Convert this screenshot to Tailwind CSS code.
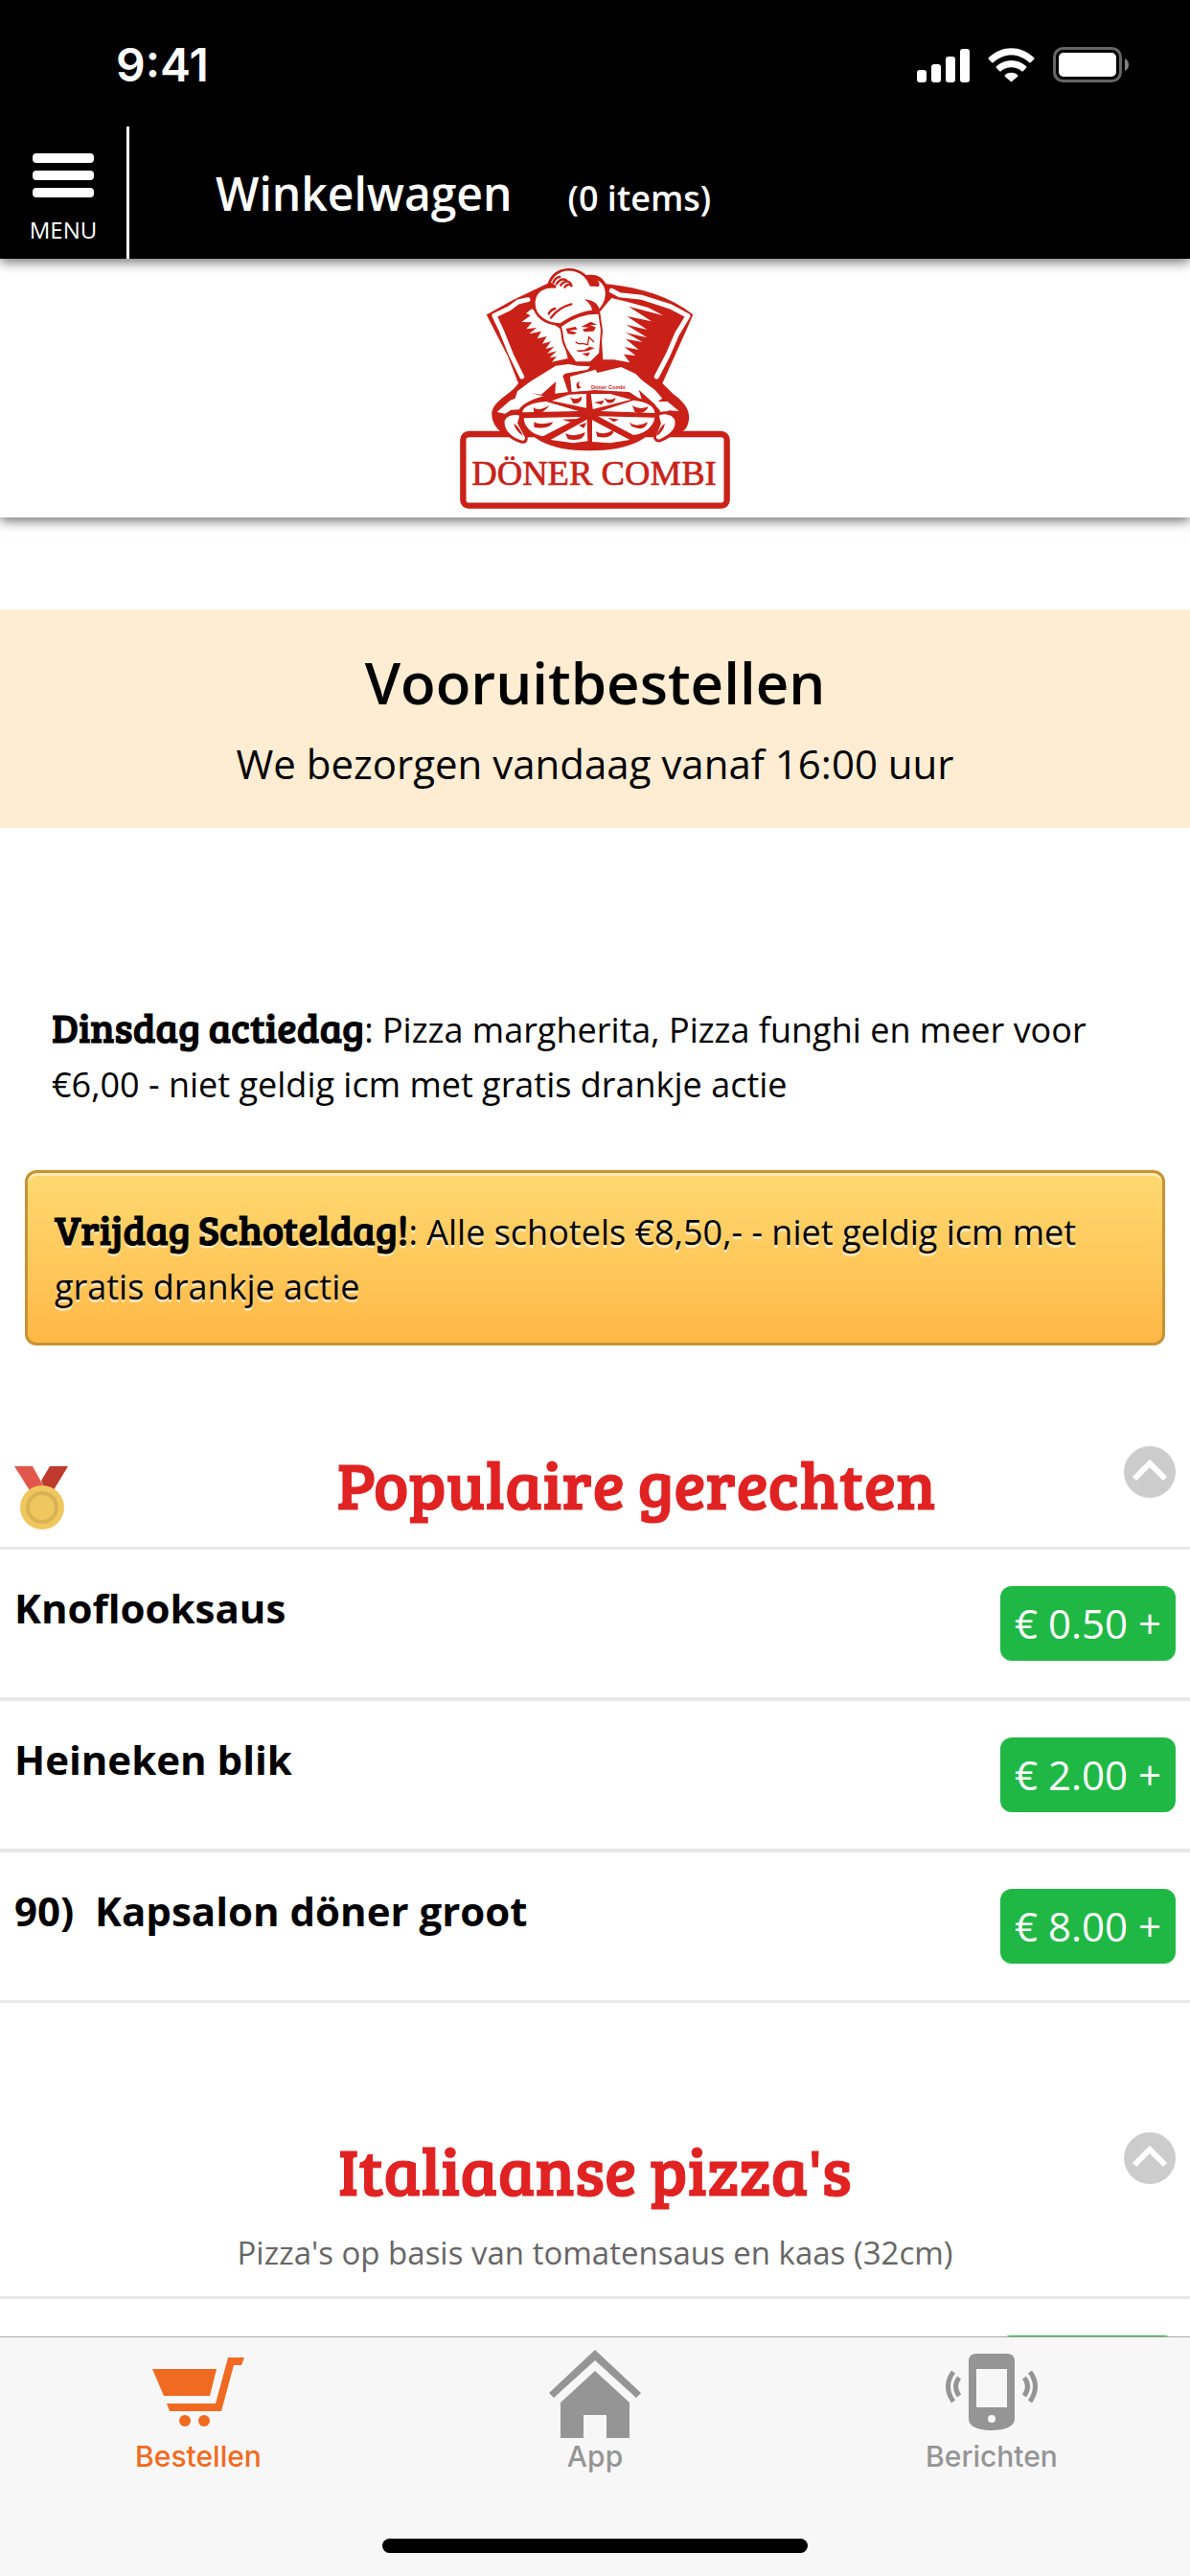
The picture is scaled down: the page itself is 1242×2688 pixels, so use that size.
<!DOCTYPE html>
<html lang="nl">
  <head>
    <meta charset="utf-8" />
    <title>Döner Combi</title>
    <meta name="viewport" content="width=device-width, initial-scale=1" />
    <script src="https://cdn.jsdelivr.net/npm/@tailwindcss/browser@4"></script>
  </head>
  <body class="bg-white">
    <div class="flex flex-col w-full h-screen overflow-hidden font-['Open_Sans',sans-serif] text-black">
      <header class="relative z-20 text-white bg-black shadow-[0_3px_12px_rgba(0,0,0,0.6)]">
        <!-- status bar -->
        <div class="flex items-center justify-between h-[132px] pt-1 pl-[121px] pr-16">
          <div class="text-[48px] leading-[60px] font-semibold font-['Inter',sans-serif]">9:41</div>
          <div class="flex items-center gap-[19px]">
            <svg class="w-[55px] h-[36px]" viewBox="0 0 55 36" fill="#fff">
              <rect x="0" y="23" width="10" height="13" rx="3" />
              <rect x="15" y="17" width="10" height="19" rx="3" />
              <rect x="30" y="9" width="10" height="27" rx="3" />
              <rect x="45" y="1" width="10" height="35" rx="3" />
            </svg>
            <svg class="w-[49px] h-[36px]" viewBox="0 0 49 36" fill="#fff">
              <path d="M1 10 Q0 11 1 12 L4 15 Q5 16 6 15 C17 5 32 5 43 15 Q44 16 45 15 L48 12 Q49 11 48 10 C34 -3 15 -3 1 10Z" />
              <path d="M9 19 Q8 20 9 21 L12 24 Q13 25 14 24 C20 19 29 19 35 24 Q36 25 37 24 L40 21 Q41 20 40 19 C31 11 18 11 9 19Z" />
              <path d="M18 28 Q17 29 18 30 L24 35 Q24.500 36 25 35 L31 30 Q32 29 31 28 C27 25 22 25 18 28Z" />
            </svg>
            <svg class="w-[79px] h-[38px]" viewBox="0 0 79 38">
              <rect x="1.500" y="1.500" width="69" height="34" rx="9" fill="none" stroke="#666" stroke-width="3" />
              <rect x="6" y="6" width="60" height="25" rx="5" fill="#fff" />
              <path d="M75 12 Q79 14 79 18.500 Q79 23 75 25Z" fill="#808080" />
            </svg>
          </div>
        </div>
        <div class="flex items-stretch h-[138px]">
          <button type="button" class="flex flex-col items-center w-[135px] pt-7 border-r-3 border-white">
            <svg class="w-16 h-[46px]" viewBox="0 0 64 46" fill="#fff">
              <rect width="64" height="10" rx="4" />
              <rect y="18" width="64" height="10" rx="4" />
              <rect y="36" width="64" height="10" rx="4" />
            </svg>
            <span class="mt-[18px] text-[24px] leading-8">MENU</span>
          </button>
          <a href="#cart" class="flex items-baseline gap-[58px] pl-[90px] pt-[38px] font-semibold">
            <span class="text-[48px] leading-[64px]">Winkelwagen</span>
            <span class="text-[36px] leading-[48px]">(0 items)</span>
          </a>
        </div>
      </header>

      <main class="flex-1 min-h-0 overflow-y-auto [scrollbar-width:none]">
        <div class="flex justify-center pt-[9px] pb-[9px] bg-white shadow-[0_3px_12px_rgba(0,0,0,0.6)]">
          <a href="#home" aria-label="Döner Combi">
            <svg class="w-[282px] h-[252px]" viewBox="30 42 846 756" fill="#c92118">
              <!-- box lid and shoulders -->
              <path d="M113 190 L195 145 L305 92 C322 48 375 30 425 66 C460 62 475 72 488 94 C600 105 690 135 760 190 L745 225 L664 405 L700 440 C735 465 750 490 747 518 C743 545 735 552 715 562 H165 C140 545 128 520 130 495 C140 455 190 440 213 405 L180 320Z" />
              <g fill="none" stroke="#fff" stroke-width="15" stroke-linecap="round" stroke-linejoin="round">
                <path d="M243 143 L212 150 L185 170 L138 193 L160 240 L190 315 L224 384" />
                <path d="M505 115 L530 128 L600 136 L690 165 L744 194 L710 250 L682 315 L646 384" />
              </g>
              <path fill="#fff" d="M255 172 L237 186 L251 193 L223 213 L256 214 L238 235 L270 231 L247 250 L285 242 L272 265 L302 258 L288 281 L315 274 L298 297 L325 290 L303 312 L333 304 L311 325 L333 321 L318 338 L368 327 L345 235Z" />
              <path fill="#fff" d="M468 180 L505 138 L555 150 L620 168 L667 193 L558 164 L630 211 L553 195 L616 237 L550 221 L616 262 L549 246 L602 276 L549 266 L590 300 L545 291 L580 318 L543 314 L562 340 L512 331 L478 331Z" />
              <!-- hat -->
              <path fill="#fff" stroke="#c92118" stroke-width="8" d="M345 221 C300 220 260 195 262 150 C265 110 300 100 330 103 L310 91 C325 50 365 45 390 51 C425 60 435 85 440 97 L462 98 C466 88 450 80 442 80 C470 70 492 100 489 130 C488 150 475 170 463 180 C430 178 385 192 345 221Z" />
              <g fill="none" stroke="#c92118" stroke-width="7" stroke-linecap="round">
                <path d="M322 90 Q330 72 343 72" />
                <path d="M332 94 Q348 72 364 83" />
                <path d="M345 98 Q365 76 378 94" />
                <path d="M358 104 Q368 90 380 100" />
                <path d="M308 187 Q315 174 328 171" />
                <path d="M315 200 Q340 166 379 157" />
              </g>
              <path d="M420 142 Q462 145 468 178 L444 182 Q445 160 420 142Z" />
              <!-- face -->
              <path fill="#fff" stroke="#c92118" stroke-width="6" d="M345 226 C385 195 430 184 466 185 L474 240 L468 312 L440 339 L392 340 C370 310 350 285 350 250Z" />
              <path d="M362 234 L392 228 L398 236 L372 240 L396 246 L388 252 L368 250Z" />
              <path d="M410 228 L440 212 L460 222 L438 222 L456 230 L448 242 L420 244 L414 236 L434 230Z" />
              <path d="M392 302 L420 300 L436 290 L452 295 L430 304 L404 307Z" />
              <path d="M412 312 L438 308 L430 321Z" />
              <path d="M392 275 Q402 284 414 280 L430 284 L434 260 L450 276" fill="none" stroke="#c92118" stroke-width="4" />
              <!-- jacket and arms -->
              <path fill="#fff" d="M330 350 L370 345 L400 350 L438 352 L430 362 L360 374 L352 382 L370 436 L328 438 L330 400 L285 440 L255 436 L310 450 L245 468 L220 487 L190 488 L172 500 L146 495 L188 458 L203 452 L210 430 L250 400Z" />
              <path fill="#fff" d="M375 384 L455 362 L460 372 L535 354 L580 375 L600 395 L640 425 L664 452 L650 462 L680 462 L716 492 L685 490 L660 500 L640 470 L590 425 L600 458 L560 432 L450 426 L380 434Z" />
              <path d="M405 398 Q388 405 398 422 L410 419 Q398 411 405 398Z" />
              <text x="441" y="422" font-size="17" font-weight="bold" font-family="Liberation Sans, sans-serif">Döner Combi</text>
              <!-- name plate -->
              <rect x="40" y="564" width="826" height="224" rx="18" fill="#fff" stroke="#c92118" stroke-width="19" />
              <!-- pizza -->
              <path d="M214 490 C230 455 320 430 430 430 C540 430 630 455 656 490 C650 580 560 616 435 616 C310 616 230 580 214 490Z" />
              <g fill="#fff">
                <path d="M226 496 C225 478 260 464 300 462 L402 492Z" />
                <path d="M318 460 L372 440 L426 438 L426 482Z" />
                <path d="M440 438 L500 438 L566 456 L446 486Z" />
                <path d="M470 492 L574 458 C610 462 640 475 640 498Z" />
                <path d="M230 514 L408 510 L290 571 C255 565 230 540 230 514Z" />
                <path d="M314 582 L428 518 L430 586 L385 592Z" />
                <path d="M444 520 L562 582 L500 592 L444 588Z" />
                <path d="M462 508 L640 512 C635 545 600 566 572 566Z" />
              </g>
              <path d="M260 480 Q275 494 310 474 Q290 504 262 496Z M375 448 Q390 460 412 446 Q412 470 385 468Z M450 465 L482 458 L474 472Z M480 450 Q498 462 518 450 Q514 470 492 466Z M570 474 Q590 490 620 478 Q610 504 578 496Z M262 526 Q280 538 322 526 Q310 552 262 542Z M350 518 L400 516 L380 528Z M360 562 Q390 575 422 558 Q420 588 368 580Z M456 556 Q480 570 512 550 Q510 582 460 572Z M492 512 L528 518 L512 526Z M560 526 Q580 546 618 526 Q610 558 568 540Z M402 536 L426 528 L418 546Z" />
              <!-- hands -->
              <path fill="#fff" stroke="#c92118" stroke-width="9" d="M165 525 C170 500 200 495 222 503 L215 530 L238 572 Q240 592 222 588 C195 580 165 560 165 525Z" />
              <path fill="#fff" stroke="#c92118" stroke-width="9" d="M708 525 C705 498 670 492 648 503 L655 530 L640 570 Q640 588 658 584 C690 570 710 550 708 525Z" />
              <path d="M198 530 Q215 540 228 570 Q205 555 198 530Z M672 530 Q655 542 645 570 Q668 556 672 530Z" />
              <text x="450" y="722" text-anchor="middle" font-size="110" font-family="Liberation Serif, serif" stroke="#c92118" stroke-width="2">DÖNER COMBI</text>
            </svg>
          </a>
        </div>

        <section class="mt-24 px-4 pt-9 pb-[39px] text-center bg-[#ffedd3]">
          <h1 class="text-[60px] leading-[80px] font-semibold">Vooruitbestellen</h1>
          <p class="mt-[17px] text-[42px] leading-[56px]">We bezorgen vandaag vanaf 16:00 uur</p>
        </section>

        <p class="mt-[182px] px-[54px] text-[36px] leading-[57px]">
          <strong class="text-[42px] leading-none font-normal font-['Bree_Serif',serif] [-webkit-text-stroke:1px]">Dinsdag actiedag</strong>: Pizza margherita, Pizza funghi en meer voor €6,00 - niet geldig icm met gratis drankje actie
        </p>
        <p class="mx-[26px] mt-[61px] px-7 pt-[33px] pb-[30px] text-[36px] leading-[57px] rounded-xl border-3 border-[#c99233] bg-linear-to-b from-[#fed970] to-[#ffb846] shadow-[inset_0_3px_0_rgba(255,255,255,0.5)] text-shadow-[0_3px_0_rgba(255,255,255,0.6)]">
          <strong class="text-[42px] leading-none font-normal font-['Bree_Serif',serif] [-webkit-text-stroke:1px]">Vrijdag Schoteldag!</strong>: Alle schotels €8,50,- - niet geldig icm met gratis drankje actie
        </p>

        <section class="mt-24">
          <div class="relative flex items-end pt-[14px] pb-[18px] border-b-3 border-[#e8e8e8]">
            <svg class="w-14 h-[66px] ml-[15px] mr-[15px]" viewBox="0 0 56 66">
              <path d="M0 0H19L40 38H24Z" fill="#e2574c" />
              <path d="M37 0H56L36 33L28 15Z" fill="#bf392c" />
              <circle cx="29" cy="43" r="23" fill="#efc75e" />
              <circle cx="29" cy="43" r="15" fill="none" stroke="#d7b354" stroke-width="4" />
            </svg>
            <h2 class="flex-1 pb-[14px] text-[69px] leading-[68px] text-center text-[#e02222] font-normal font-['Bree_Serif',serif] [-webkit-text-stroke:1px]">Populaire gerechten</h2>
            <button type="button" aria-label="Inklappen" class="absolute top-[9px] right-[15px]">
              <svg class="w-[54px] h-[54px]" viewBox="0 0 54 54">
                <circle cx="27" cy="27" r="27" fill="#ccc" />
                <path d="M11 34L27 18L43 34" fill="none" stroke="#fff" stroke-width="6" />
              </svg>
            </button>
          </div>
          <ul>
            <li class="flex items-start justify-between px-[15px] border-b-4 border-[#e8e8e8]">
              <span class="pt-[33px] text-[42px] leading-[56px] font-bold">Knoflooksaus</span>
              <button type="button" class="my-[38px] px-[15px] h-[78px] text-[42px] leading-[56px] text-white bg-[#20b845] rounded-xl">€ 0.50 +</button>
            </li>
            <li class="flex items-start justify-between px-[15px] border-b-4 border-[#e8e8e8]">
              <span class="pt-[33px] text-[42px] leading-[56px] font-bold">Heineken blik</span>
              <button type="button" class="my-[38px] px-[15px] h-[78px] text-[42px] leading-[56px] text-white bg-[#20b845] rounded-xl">€ 2.00 +</button>
            </li>
            <li class="flex items-start justify-between px-[15px] border-b-3 border-[#e8e8e8]">
              <span class="pt-[33px] text-[42px] leading-[56px] font-bold">90)&nbsp; Kapsalon döner groot</span>
              <button type="button" class="my-[38px] px-[15px] h-[78px] text-[42px] leading-[56px] text-white bg-[#20b845] rounded-xl">€ 8.00 +</button>
            </li>
          </ul>
        </section>

        <section class="mt-[126px]">
          <div class="relative pt-[14px] pb-[23px] text-center border-b-3 border-[#e8e8e8]">
            <h2 class="pb-[14px] text-[69px] leading-[68px] text-[#e02222] font-normal font-['Bree_Serif',serif] [-webkit-text-stroke:1px]">Italiaanse pizza's</h2>
            <p class="mt-[17px] text-[33px] leading-[44px] text-[#666]">Pizza's op basis van tomatensaus en kaas (32cm)</p>
            <button type="button" aria-label="Inklappen" class="absolute top-[9px] right-[15px]">
              <svg class="w-[54px] h-[54px]" viewBox="0 0 54 54">
                <circle cx="27" cy="27" r="27" fill="#ccc" />
                <path d="M11 34L27 18L43 34" fill="none" stroke="#fff" stroke-width="6" />
              </svg>
            </button>
          </div>
          <div class="flex justify-end px-[15px]">
            <button type="button" aria-label="Toevoegen" class="my-[38px] w-[184px] h-[78px] bg-[#20b845] rounded-xl"></button>
          </div>
        </section>
      </main>

      <footer class="relative z-10 h-[250px] bg-[#f7f7f7] border-t border-[#aaa]">
        <nav class="grid grid-cols-3 pt-[9px] text-[30px] leading-[38px] font-medium text-[#959595] font-['Inter',sans-serif]">
          <a href="#order" class="flex flex-col items-center text-[#f16a21]">
            <svg class="w-24 h-24" viewBox="0 0 96 96" fill="currentColor">
              <path d="M0 24H67L60 52H12Z" />
              <path d="M79 12H96L93 20H85L72 68H18L15 60H66Z" />
              <circle cx="34" cy="78" r="6" />
              <circle cx="54" cy="78" r="6" />
            </svg>
            Bestellen
          </a>
          <a href="#app" class="flex flex-col items-center">
            <svg class="w-24 h-24" viewBox="0 0 96 96" fill="currentColor">
              <path d="M48 4L96 49L91 54L48 15L5 54L0 49Z" />
              <path d="M48 26L84 59V96H60V72H36V96H12V59Z" />
            </svg>
            App
          </a>
          <a href="#messages" class="flex flex-col items-center">
            <svg class="w-24 h-24" viewBox="0 0 96 96" fill="currentColor">
              <path fill-rule="evenodd" d="M32 8H64Q72 8 72 16V76C72 84 62 88 48 88S24 84 24 76V16Q24 8 32 8ZM32 24V64H64V24ZM48 72A4 4 0 1 0 48 80A4 4 0 1 0 48 72Z" />
              <g fill="none" stroke="currentColor" stroke-width="5">
                <path d="M8 27Q-3 42 8 58M14 33Q7 42 14 52" />
                <path d="M88 27Q99 42 88 58M82 33Q89 42 82 52" />
              </g>
            </svg>
            Berichten
          </a>
        </nav>
        <div class="w-[444px] h-[15px] mx-auto mt-[67px] bg-black rounded-full"></div>
      </footer>
    </div>
  </body>
</html>
